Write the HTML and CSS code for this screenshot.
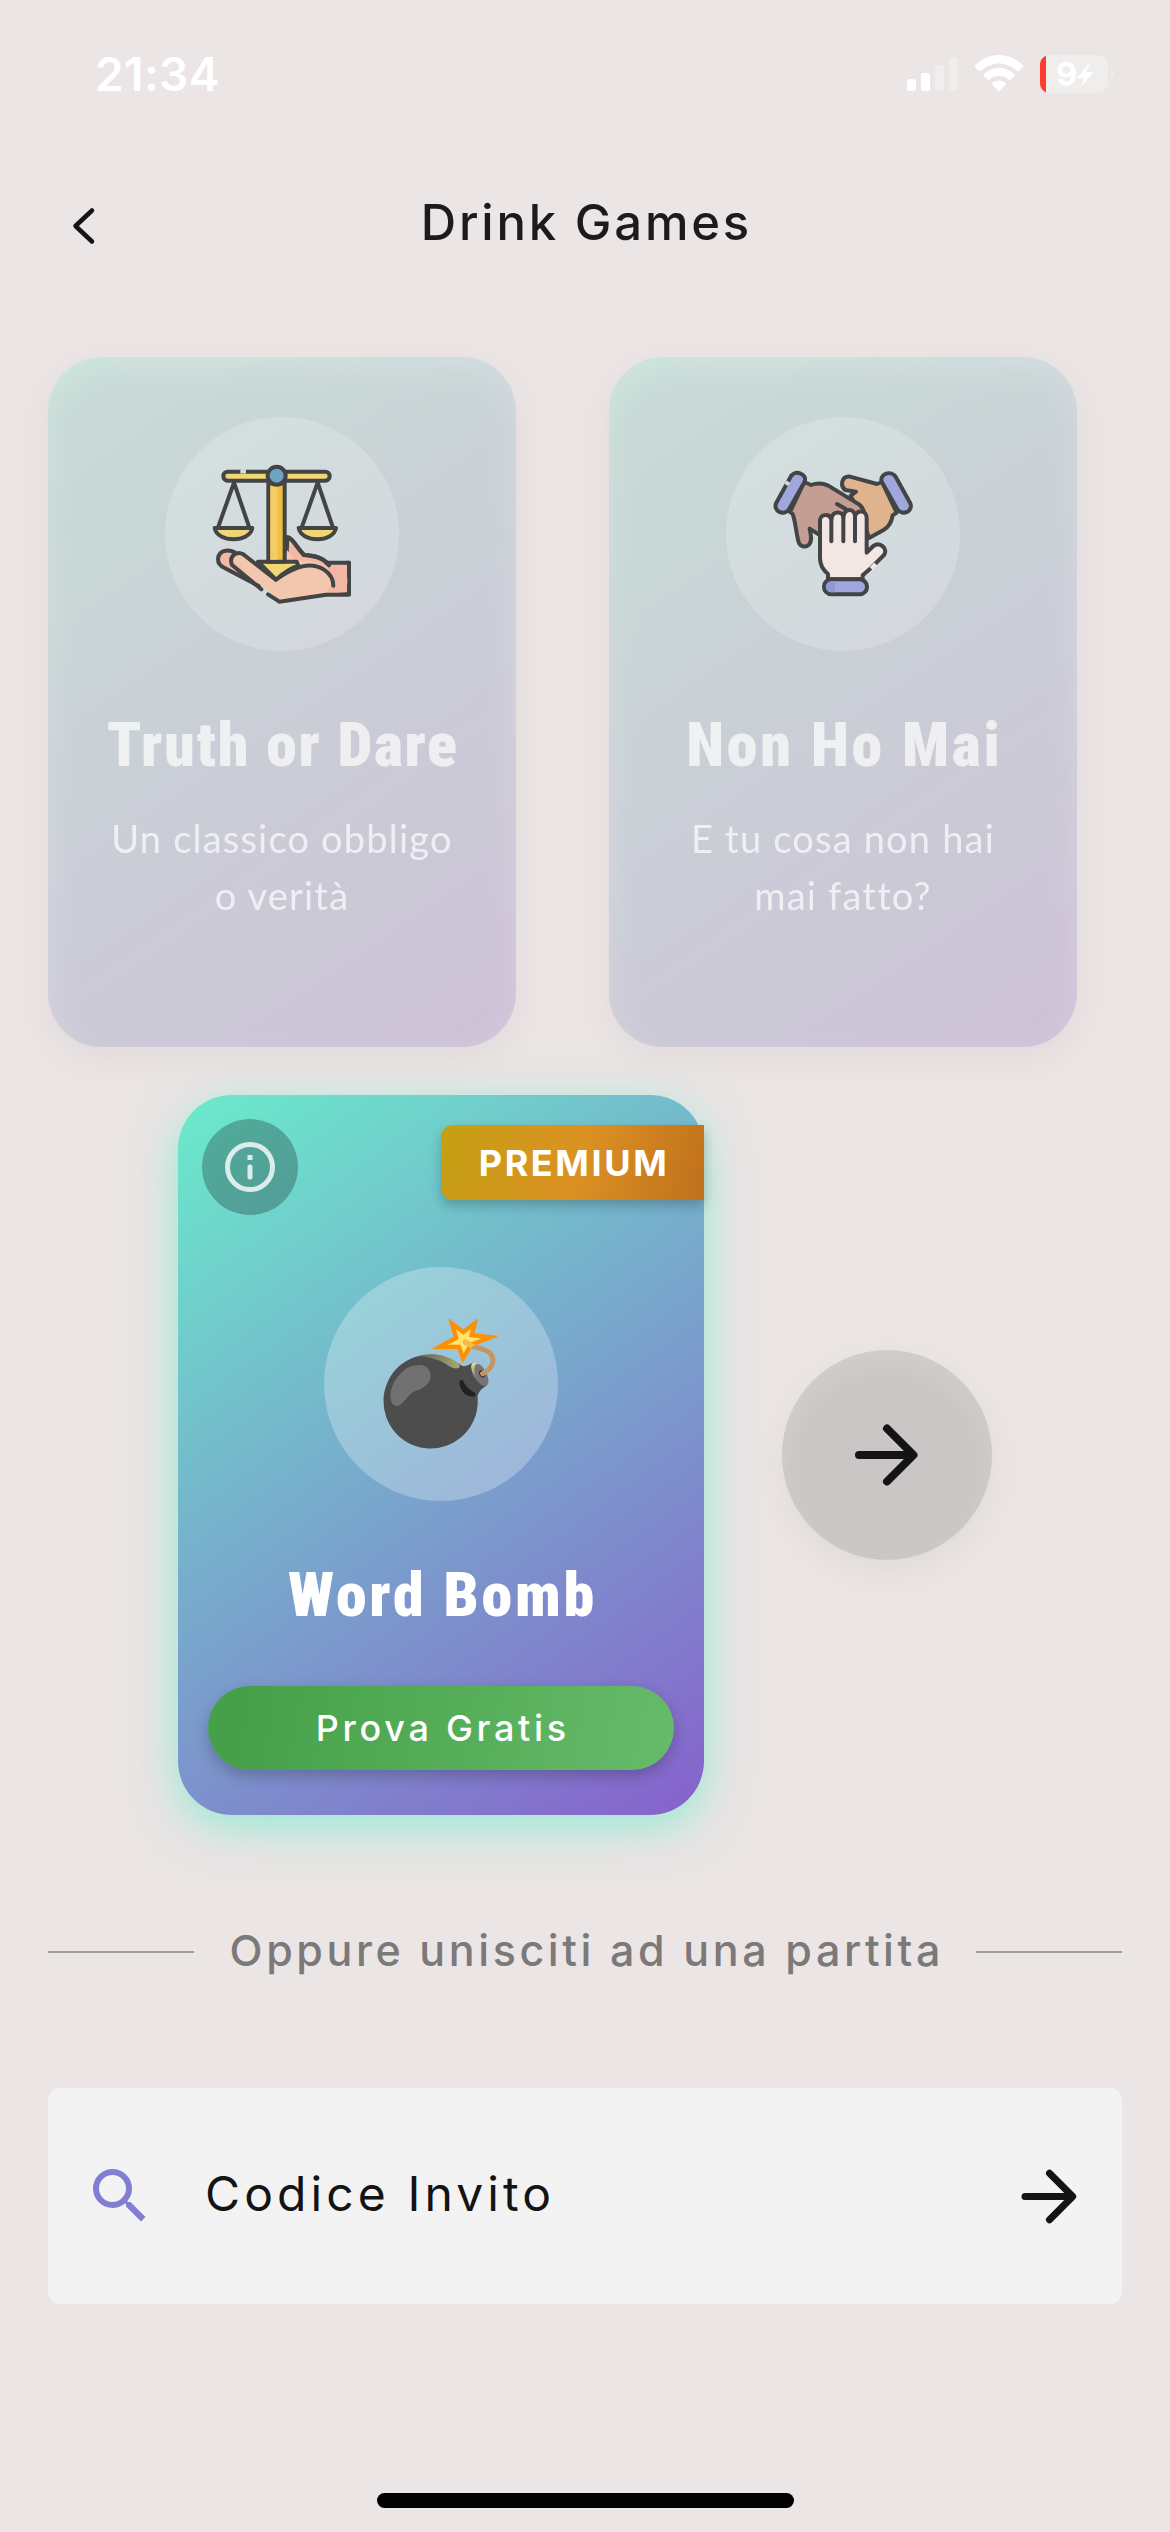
FILE: index.html
```html
<!DOCTYPE html>
<html lang="it">
<head>
<meta charset="utf-8">
<title>Drink Games</title>
<link rel="stylesheet" href="styles.css">
</head>
<body>
<div class="screen">
  <div class="status">
    <span class="time">21:34</span>
    <svg class="status-icons" viewBox="0 0 750 210">
      <g fill="#fff">
        <rect x="81" y="117" width="27" height="36" rx="8"/>
        <rect x="123" y="99" width="27" height="54" rx="8"/>
        <g fill="#efeeec">
          <rect x="165" y="75" width="27" height="78" rx="8"/>
          <rect x="207" y="51" width="27" height="102" rx="8"/>
          <path d="M693 85a20 20 0 0 1 0 33z"/>
          <rect x="480" y="45" width="204" height="114" rx="30"/>
        </g>
        <path fill="#ff3b30" d="M498 47v110c-11-5-18-14-18-28V75c0-14 7-23 18-28z"/>
        <path d="M284 78c40-44 106-44 146 0 1 3-14 16-18 16-32-31-78-31-110 0-4 0-19-13-18-16z"/>
        <path d="M310 104c26-27 68-27 94 0 1 3-13 17-17 16-17-17-43-17-60 0-4 1-18-13-17-16z"/>
        <path d="M336 130c12-11 30-11 42 0 1 4-17 21-21 24-4-3-22-20-21-24z"/>
        <path d="M631 67l-41 48h22l-9 27 37-46h-22z"/>
        <text class="battery-level" x="528" y="139">9</text>
      </g>
    </svg>
  </div>

  <header class="appbar">
    <svg class="back" viewBox="0 0 36 48"><path d="M26 8.500 9.500 24l16.500 15.500"/></svg>
    <h1>Drink Games</h1>
  </header>

  <main>
    <section class="row">
      <article class="card faded">
        <div class="disc">
          <svg viewBox="-105 -69 702 702">
            <g class="ink">
              <path fill="#f2b8a5" d="M262 292c14 0 26 28 50 53 30 3 60 8 74 28l61-5v92h-80l-110-50z"/>
              <path fill="#f3c7ae" stroke="none" d="M262 330l20 30 60 5 50 20-4 75-150 22-36-30-90-75c-22-22 0-42 24-32l90 75z"/>
              <path fill="#f2b8a5" d="M104 337C82 325 55 333 54 358c0 14 8 21 20 26l102 54"/>
              <path fill="#f3c7ae" stroke="none" d="M100 366c-8-24 16-32 34-18l93 71 50-30c50-25 105-25 120 20 5 25-5 45-25 53l-135 15-50-38z"/>
              <path stroke="none" fill="#f2b8a5" d="M378 390c24 20 20 50-4 72l68-5v-85h-52z"/>
              <path d="M184 448l-88-73c-10-25 12-44 34-32l97 76c60-40 105-56 145-30 22 15 28 30 28 48"/>
              <path d="M204 463l34 22 140-21h69v-28M447 410v-42h-68"/>
              <path fill="none" d="M262 292c14 0 26 28 50 53 30 0 58 8 75 31"/>
              <path fill="#f1d675" d="M174 365h116l5 12c-25 8-47 24-67 42z"/>
              <path fill="#f2be42" d="M205 130h49v235h-49z"/>
              <path fill="#f3cc65" stroke="none" d="M211 138h22v221h-22z"/>
              <rect x="70" y="95" width="319" height="27" rx="13" fill="#f1d675"/>
              <path class="notch" d="M121 94h17"/>
              <circle cx="230" cy="107" r="27" fill="#6da4c2"/>
              <path fill="none" d="M102 128l-47 132M102 128l45 132M353 128l-47 132M353 128l45 132"/>
              <path fill="#f1d675" d="M44 264h113c-8 45-105 45-113 0zM296 264h112c-8 45-104 45-112 0z"/>
            </g>
          </svg>
        </div>
        <h2 class="tight">Truth or Dare</h2>
        <p>Un classico obbligo<br>o verità</p>
      </article>

      <article class="card faded">
        <div class="disc">
          <svg viewBox="-102 -99 702 702">
            <g class="ink">
              <path fill="#dfb48d" d="M366 96l-15 6-81-22c-25-3-31 28-14 40l32 5-16 12 40 80 15 47 45-25c16-10 23-24 26-43l12-8z"/>
              <path fill="#c49d93" d="M133 96l20 9c18-7 35-6 52 2l93 57c10 8 14 18 13 25l-60 60-74 5-28-18c2 16 10 34-2 48-10 10-25 6-30-5-8-20-9-60-19-87l-8-6z"/>
              <path fill="none" d="M231 162l26 15"/>
              <path fill="#9fa7dc" d="M90 84c12-28 55-14 43 13L87 178c-15 22-50 5-38-20zM409 84c-14-27-54-12-43 13l46 81c16 22 50 5 38-20z"/>
              <path class="notch" d="M85 95l-6 10"/>
              <path fill="#f3e7e3" d="M204 388v-16c-16-13-24-30-24-48V210c2-18 28-20 34-3 4-26 34-24 36-5 4-30 32-27 35-5 8-18 33-16 35 5v106l20-20c20-14 45 8 32 27l-39 39-25 22v12z"/>
              <path fill="none" d="M214 205v69M250 200v74M285 195v79"/>
              <path class="notch light" d="M334 356l13-14"/>
              <rect x="192" y="388" width="129" height="45" rx="22" fill="#9fa7dc"/>
              <path stroke="none" fill="#8f99d6" d="M225 394h-12c-21 2-21 31 0 33h12z"/>
            </g>
          </svg>
        </div>
        <h2>Non Ho Mai</h2>
        <p>E tu cosa non hai<br>mai fatto?</p>
      </article>
    </section>

    <section class="row featured">
      <article class="card active">
        <svg class="info" viewBox="0 0 96 96">
          <circle class="ring" cx="48" cy="48" r="22.500"/>
          <path class="ring" d="M48 48v10"/>
          <rect class="dot" x="45.500" y="36" width="5" height="5"/>
        </svg>
        <span class="badge">PREMIUM</span>
        <div class="disc emoji">💣</div>
        <h2>Word Bomb</h2>
        <button class="try">Prova Gratis</button>
      </article>
      <button class="next" aria-label="Avanti">
        <svg class="arrow" viewBox="0 0 72 72"><path d="M8 36h54M36 9.500 62.500 36 36 62.500"/></svg>
      </button>
    </section>

    <div class="divider"><span>Oppure unisciti ad una partita</span></div>

    <div class="invite">
      <svg class="search" viewBox="0 0 24 24"><path d="M15.500 14h-.79l-.28-.27A6.471 6.471 0 0 0 16 9.500 6.500 6.500 0 1 0 9.500 16c1.610 0 3.090-.59 4.230-1.570l.27.28v.79l5 4.990L20.490 19l-4.990-5zm-6 0C7.010 14 5 11.990 5 9.500S7.010 5 9.500 5 14 7.010 14 9.500 11.990 14 9.500 14z"/></svg>
      <span>Codice Invito</span>
      <svg class="arrow small" viewBox="0 0 72 72"><path d="M8 36h54M36 9.500 62.500 36 36 62.500"/></svg>
    </div>
  </main>
  <div class="home"></div>
</div>
</body>
</html>
```
FILE: styles.css
```css
* { box-sizing: border-box; margin: 0; }
body { background: #ebe5e5; color: #141414; font-family: Inter, sans-serif; }
.screen {
  width: 1170px; height: 2532px; overflow: hidden;
  display: flex; flex-direction: column;
}
button { border: 0; padding: 0; font-family: inherit; }

.status {
  height: 150px; padding: 40px 40px 0 95px;
  display: flex; justify-content: space-between;
}
.time { font-size: 46px; font-weight: 600; line-height: 69px; letter-spacing: .4px; color: #fff; }
.status-icons { width: 250px; height: 70px; }
.battery-level { font: 700 98px Inter, sans-serif; }

.appbar {
  height: 146px; padding: 0 66px;
  display: grid; grid-template-columns: 36px 1fr 36px; align-items: center;
}
.back { width: 36px; height: 48px; margin-top: 5px; fill: none; stroke: #141414; stroke-width: 4.500; stroke-linecap: round; stroke-linejoin: round; }
h1 {
  text-align: center; font-size: 49px; font-weight: 500; line-height: 60px;
  letter-spacing: 2.8px; text-indent: 2.8px; color: #1b1b1f;
}

main { padding: 61px 48px 0; flex: 1; }
.row { display: flex; gap: 93px; }
.card {
  position: relative; isolation: isolate;
  width: 468px; height: 690px; padding-top: 60px; border-radius: 54px;
  display: flex; flex-direction: column; align-items: center; color: #fff;
}
.faded {
  background: linear-gradient(145.900deg, rgba(106, 235, 203, .2), rgba(135, 97, 205, .2));
}
.faded::before, .next::before {
  content: ""; position: absolute; z-index: -1; inset: 12px 0 -12px;
  border-radius: inherit; background: rgba(0, 0, 0, .045); filter: blur(16px);
}
.faded h2, .faded p { opacity: .7; }
.disc {
  width: 234px; height: 234px; flex: none; border-radius: 50%;
  background: rgba(255, 255, 255, .2);
}
.disc svg { display: block; width: 100%; height: 100%; }
.ink { stroke: #424445; stroke-width: 12; stroke-linecap: round; stroke-linejoin: round; fill: none; }
.notch { stroke: #d3dddc; stroke-width: 13; stroke-linecap: butt; }
.notch.light { stroke: #f3e7e3; }
h2 {
  margin-top: 57px; font: 900 62px/74px Roboto, sans-serif; font-stretch: 75%;
  letter-spacing: 2.8px; text-indent: 2.8px; white-space: nowrap;
}
h2.tight { letter-spacing: 1.7px; text-indent: 1.7px; }
.card p { margin-top: 28px; font: 400 38px/57px Lato, sans-serif; letter-spacing: 1.2px; text-align: center; }

.featured { margin: 48px 0 0 130px; gap: 78px; align-items: center; }
.active {
  width: 526px; height: 720px; padding-top: 172px;
  background: linear-gradient(143.900deg, #6aebcb, #8761cd);
  box-shadow: 0 12px 46px rgba(106, 235, 203, .66);
}
.active .disc { background: rgba(255, 255, 255, .27); }
.emoji { display: flex; align-items: center; justify-content: center; font: 118px/234px "Noto Color Emoji", Inter, sans-serif; }
.info {
  position: absolute; left: 24px; top: 24px; width: 96px; height: 96px;
  border-radius: 50%; background: rgba(0, 0, 0, .25);
}
.ring { fill: none; stroke: rgba(255, 255, 255, .8); stroke-width: 5; stroke-linecap: round; }
.dot { fill: rgba(255, 255, 255, .8); }
.badge {
  position: absolute; right: 0; top: 30px; width: 263px; height: 75px;
  border-radius: 12px 0 0 12px;
  background: linear-gradient(106deg, #c4a013, #dc9123 52%, #c0701c);
  box-shadow: 0 6px 12px rgba(0, 0, 0, .22);
  font-size: 36px; font-weight: 700; line-height: 76px; letter-spacing: 2.6px; text-indent: 3px; text-align: center;
}
.try {
  margin-top: 54px; width: 466px; height: 84px; border-radius: 42px; color: #fff;
  background: linear-gradient(100deg, #46a049 8%, #66bb6a);
  box-shadow: 0 6px 15px rgba(0, 0, 0, .22);
  font-size: 36px; font-weight: 500; letter-spacing: 3.7px; text-indent: 3.7px;
}
.next {
  position: relative; isolation: isolate; width: 210px; height: 210px; border-radius: 50%;
  background: rgba(0, 0, 0, .095); display: flex; align-items: center; justify-content: center;
}
.arrow { width: 72px; height: 72px; fill: none; stroke: #141414; stroke-width: 8; stroke-linecap: round; stroke-linejoin: round; }
.arrow.small { width: 63px; height: 63px; margin-left: auto; }

.divider {
  margin-top: 102px; height: 70px; display: flex; align-items: center; gap: 36px;
  color: #7b7979; font-size: 43px; font-weight: 500;
}
.divider span { letter-spacing: 3.6px; margin-right: -3.6px; white-space: nowrap; position: relative; top: -2px; }
.divider::before, .divider::after { content: ""; flex: 1; height: 2px; background: #a09c9c; }

.invite {
  margin-top: 101px; height: 216px; padding: 0 41px 0 36px; border-radius: 12px;
  background: #f3f3f3; display: flex; align-items: center;
}
.search { width: 72px; height: 72px; margin-right: 49px; fill: #827fd3; }
.invite span { font-size: 48px; line-height: 60px; letter-spacing: 4.100px; margin-bottom: 5px; }

.home { width: 417px; height: 15px; margin: 0 auto 24px; border-radius: 8px; background: #000; }
```
